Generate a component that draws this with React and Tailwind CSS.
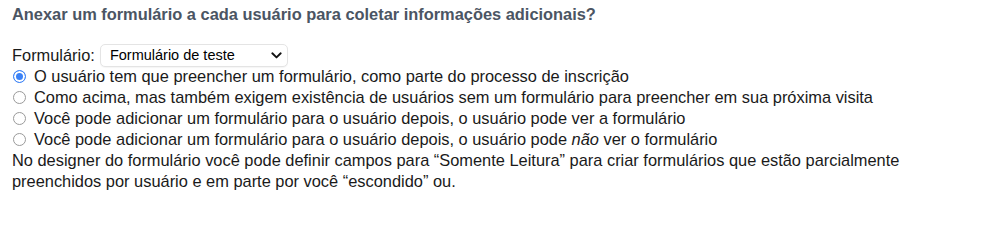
const options = [
  { id: "required", label: "O usuário tem que preencher um formulário, como parte do processo de inscrição" },
  {
    id: "existing",
    label: "Como acima, mas também exigem existência de usuários sem um formulário para preencher em sua próxima visita",
  },
  { id: "visible", label: "Você pode adicionar um formulário para o usuário depois, o usuário pode ver a formulário" },
  { id: "hidden", label: null },
];

export default function App() {
  return (
    <div className="px-3 pt-1 text-[16.4px] leading-[21px] text-[#1a1a1a] font-['Liberation_Sans',Arial,sans-serif]">
      <h3 className="text-[16.4px] font-bold leading-[20px] text-[#4b5563]">
        Anexar um formulário a cada usuário para coletar informações adicionais?
      </h3>

      <div className="mt-5 flex h-[22px] items-center gap-[5px]">
        <label htmlFor="form">Formulário:</label>
        <div className="relative">
          <select
            id="form"
            defaultValue="teste"
            className="h-[23px] w-[188px] appearance-none rounded-[5px] border border-[#e4e4e4] bg-white pl-[9px] text-[14.5px] text-black shadow-[0_1px_1px_rgba(0,0,0,0.04)]"
          >
            <option value="teste">Formulário de teste</option>
          </select>
          <svg
            className="pointer-events-none absolute right-[6px] top-[8px]"
            width="11"
            height="7"
            viewBox="0 0 11 7"
          >
            <path d="M1.3 1.3 5.5 5.4 9.7 1.3" fill="none" stroke="#111" strokeWidth="1.9" strokeLinecap="round" strokeLinejoin="round" />
          </svg>
        </div>
      </div>

      <div>
        {options.map((o, i) => (
          <label key={o.id} className="flex items-center gap-2">
            <input
              type="radio"
              name="attach"
              defaultChecked={i === 0}
              className="m-0 ml-[1px] h-[13px] w-[13px] shrink-0 appearance-none rounded-full border border-[#9a9a9a] bg-white checked:border-[#3b82f6] checked:bg-[#3b82f6] checked:shadow-[inset_0_0_0_2px_#fff]"
            />
            <span>
              {o.label ?? (
                <>
                  Você pode adicionar um formulário para o usuário depois, o usuário pode <em>não</em> ver o formulário
                </>
              )}
            </span>
          </label>
        ))}
      </div>

      <p className="max-w-[930px]">
        No designer do formulário você pode definir campos para “Somente Leitura” para criar formulários que estão parcialmente
        preenchidos por usuário e em parte por você “escondido” ou.
      </p>
    </div>
  );
}
